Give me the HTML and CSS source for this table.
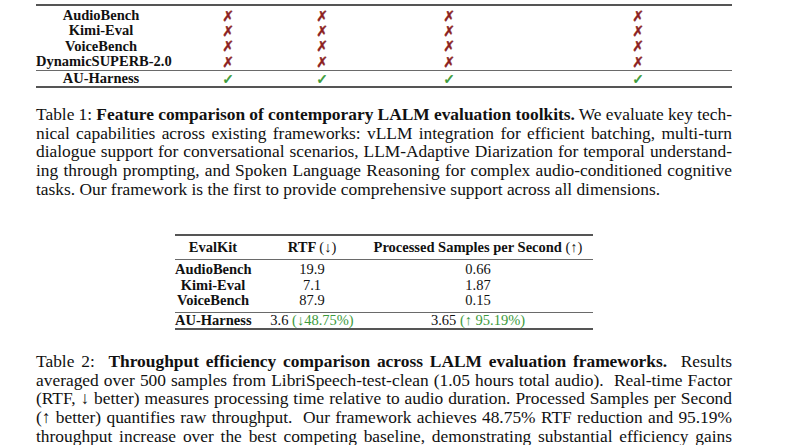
FILE: index.html
```html
<!DOCTYPE html>
<html lang="en">
<head>
<meta charset="utf-8">
<title>LALM evaluation toolkits</title>
<link rel="stylesheet" href="styles.css">
</head>
<body>
<div class="page">
  <div class="t1">
    <div class="row head">
      <span class="name"></span>
      <span class="c">vLLM Support</span>
      <span class="c">Multi-turn</span>
      <span class="c">LLM-Adaptive Diarization</span>
      <span class="c">Spoken Language Reasoning</span>
    </div>
    <div class="rule thick"></div>
    <div class="body">
      <div class="row"><span class="name">AudioBench</span><span class="c x">✗</span><span class="c x">✗</span><span class="c x">✗</span><span class="c x">✗</span></div>
      <div class="row"><span class="name">Kimi-Eval</span><span class="c x">✗</span><span class="c x">✗</span><span class="c x">✗</span><span class="c x">✗</span></div>
      <div class="row"><span class="name">VoiceBench</span><span class="c x">✗</span><span class="c x">✗</span><span class="c x">✗</span><span class="c x">✗</span></div>
      <div class="row"><span class="name">DynamicSUPERB-2.0</span><span class="c x">✗</span><span class="c x">✗</span><span class="c x">✗</span><span class="c x">✗</span></div>
    </div>
    <div class="rule thin"></div>
    <div class="row last"><span class="name">AU-Harness</span><span class="c ok">✓</span><span class="c ok">✓</span><span class="c ok">✓</span><span class="c ok">✓</span></div>
    <div class="rule thick"></div>
  </div>

  <p class="cap cap1">
    <span class="ln tight">Table 1: <b>Feature comparison of contemporary LALM evaluation toolkits.</b> We evaluate key tech-</span>
    <span class="ln">nical capabilities across existing frameworks: vLLM integration for efficient batching, multi-turn</span>
    <span class="ln">dialogue support for conversational scenarios, LLM-Adaptive Diarization for temporal understand-</span>
    <span class="ln">ing through prompting, and Spoken Language Reasoning for complex audio-conditioned cognitive</span>
    <span class="ln end">tasks. Our framework is the first to provide comprehensive support across all dimensions.</span>
  </p>

  <div class="t2">
    <div class="rule thick"></div>
    <div class="row2 head2">
      <span class="k">EvalKit</span>
      <span class="v">RTF <span class="reg">(↓)</span></span>
      <span class="p">Processed Samples per Second <span class="reg">(↑)</span></span>
    </div>
    <div class="rule thin"></div>
    <div class="body2">
      <div class="row2"><span class="k">AudioBench</span><span class="v">19.9</span><span class="p">0.66</span></div>
      <div class="row2"><span class="k">Kimi-Eval</span><span class="v">7.1</span><span class="p">1.87</span></div>
      <div class="row2"><span class="k">VoiceBench</span><span class="v">87.9</span><span class="p">0.15</span></div>
    </div>
    <div class="rule thin mid2"></div>
    <div class="row2"><span class="k">AU-Harness</span><span class="v">3.6 <span class="gain">(↓48.75%)</span></span><span class="p">3.65 <span class="gain">(↑ 95.19%)</span></span></div>
    <div class="rule thick"></div>
  </div>

  <p class="cap cap2">
    <span class="ln">Table 2: &nbsp;<b>Throughput efficiency comparison across LALM evaluation frameworks.</b> &nbsp;Results</span>
    <span class="ln">averaged over 500 samples from LibriSpeech-test-clean (1.05 hours total audio). &nbsp;Real-time Factor</span>
    <span class="ln">(RTF, ↓ better) measures processing time relative to audio duration. Processed Samples per Second</span>
    <span class="ln">(↑ better) quantifies raw throughput. &nbsp;Our framework achieves 48.75% RTF reduction and 95.19%</span>
    <span class="ln">throughput increase over the best competing baseline, demonstrating substantial efficiency gains</span>
  </p>
</div>
</body>
</html>
```

FILE: styles.css
```css
html, body {
  margin: 0;
  padding: 0;
  background: #ffffff;
  overflow: hidden;
}

body {
  width: 800px;
  height: 445px;
  color: #111111;
  font-family: "Liberation Serif", "Times New Roman", serif;
}

.page {
  width: 696px;
  padding-left: 36px;
}

/* ---------- rules ---------- */
.rule.thick {
  height: 2px;
  background: #555555;
}

.rule.thin {
  height: 1px;
  background: #6a6a6a;
}

/* ---------- table 1 ---------- */
.t1 {
  margin-top: -16px;
  font-size: 14.5px;
}

.t1 .row {
  display: grid;
  grid-template-columns: 130px 124px 64px 190px 188px;
  height: 15.3px;
  line-height: 15.3px;
  align-items: center;
}

.t1 .head {
  height: 15px;
  line-height: 15px;
  padding-bottom: 5px;
  font-weight: bold;
}

.t1 .body {
  padding-top: 2px;
  padding-bottom: 1px;
}

.t1 .row.last {
  height: 15px;
  line-height: 15px;
}

.t1 .name {
  font-weight: bold;
  text-align: center;
  white-space: nowrap;
}

.t1 .c {
  text-align: center;
  white-space: nowrap;
  justify-self: center;
}

.t1 .x,
.t1 .ok {
  font-family: "DejaVu Sans", sans-serif;
  font-size: 14px;
  line-height: 14px;
  -webkit-text-stroke: 0.5px currentColor;
}

.t1 .x {
  color: #8c1f1f;
}

.t1 .ok {
  color: #3a9a34;
}

/* ---------- captions ---------- */
.cap {
  margin: 0;
  font-size: 17.4px;
  line-height: 18.6px;
  text-align: justify;
}

.cap1 {
  margin-top: 17px;
}

.cap2 {
  margin-top: 22px;
}

.cap .ln {
  display: block;
  text-align: justify;
  text-align-last: justify;
}

.cap .ln.tight {
  word-spacing: -2.5px;
}

.cap .ln.end {
  text-align-last: left;
}

/* ---------- table 2 ---------- */
.t2 {
  width: 418px;
  margin: 36px auto 0 139px;
  font-size: 14.5px;
}

.row2 {
  display: grid;
  grid-template-columns: 76px 122px 220px;
  height: 15.5px;
  line-height: 15.5px;
  align-items: center;
  white-space: nowrap;
}

.head2 {
  height: 22px;
  line-height: 22px;
  font-weight: bold;
  margin-bottom: 0.5px;
}

.body2 {
  padding-top: 2.5px;
}

.rule.mid2 {
  margin-top: 3px;
}

.row2 .k {
  font-weight: bold;
  text-align: center;
}

.row2 .v {
  text-align: center;
}

.row2 .p {
  text-align: center;
  padding-right: 10px;
}

.reg {
  font-weight: normal;
}

.gain {
  color: #3c9a3c;
}
```
